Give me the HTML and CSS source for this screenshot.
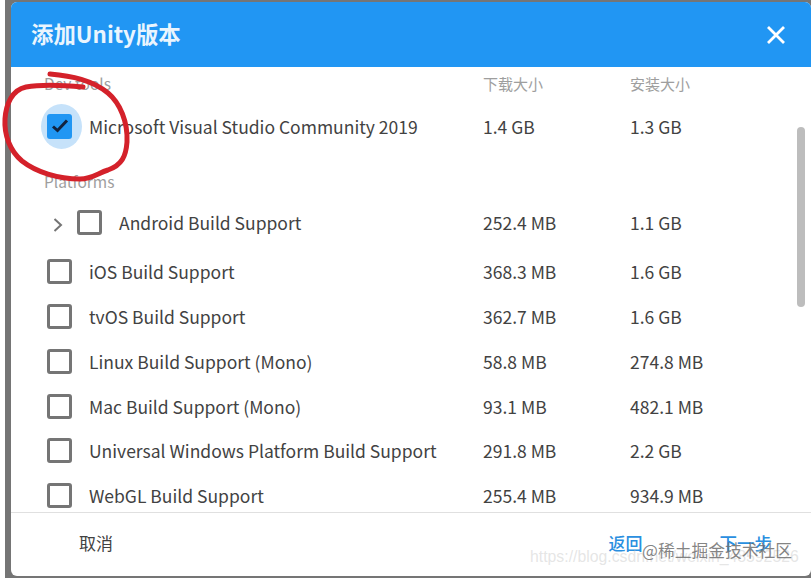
FILE: index.html
```html
<!DOCTYPE html>
<html lang="zh">
<head>
    <meta charset="UTF-8">
    <title>添加Unity版本</title>
    <link rel="stylesheet" href="styles.css">
</head>
<body>
<div class="backdrop">
    <div class="dialog">
        <!-- Header -->
        <div class="header">
            <span class="title">添加Unity版本</span>
            <svg class="close" width="20" height="20" viewBox="0 0 20 20"><path d="M2 2 18 18M18 2 2 18" stroke="#fff" stroke-width="2.8" fill="none"/></svg>
        </div>

        <!-- Module list -->
        <div class="list">
            <div class="row group first">
                <span class="name">Dev tools</span>
                <span>下载大小</span>
                <span>安装大小</span>
            </div>
            <div class="row item ms">
                <span class="check checked">
                    <svg width="25" height="25" viewBox="0 0 25 25"><path d="M6 12.5 10.5 16.5 20 6.5" stroke="#12233f" stroke-width="3" fill="none"/></svg>
                </span>
                <span class="name">Microsoft Visual Studio Community 2019</span>
                <span>1.4 GB</span>
                <span>1.3 GB</span>
            </div>
            <div class="row group platforms">
                <span class="name">Platforms</span>
            </div>
            <div class="row item android">
                <svg class="arrow" width="12" height="16" viewBox="0 0 12 16"><path d="M2.5 2 9 8 2.5 14" stroke="#757575" stroke-width="2" fill="none"/></svg>
                <span class="check"></span>
                <span class="name">Android Build Support</span>
                <span>252.4 MB</span>
                <span>1.1 GB</span>
            </div>
            <div class="row item">
                <span class="check"></span>
                <span class="name">iOS Build Support</span>
                <span>368.3 MB</span>
                <span>1.6 GB</span>
            </div>
            <div class="row item">
                <span class="check"></span>
                <span class="name">tvOS Build Support</span>
                <span>362.7 MB</span>
                <span>1.6 GB</span>
            </div>
            <div class="row item">
                <span class="check"></span>
                <span class="name">Linux Build Support (Mono)</span>
                <span>58.8 MB</span>
                <span>274.8 MB</span>
            </div>
            <div class="row item">
                <span class="check"></span>
                <span class="name">Mac Build Support (Mono)</span>
                <span>93.1 MB</span>
                <span>482.1 MB</span>
            </div>
            <div class="row item">
                <span class="check"></span>
                <span class="name">Universal Windows Platform Build Support</span>
                <span>291.8 MB</span>
                <span>2.2 GB</span>
            </div>
            <div class="row item">
                <span class="check"></span>
                <span class="name">WebGL Build Support</span>
                <span>255.4 MB</span>
                <span>934.9 MB</span>
            </div>
            <div class="scrollbar"></div>
        </div>

        <!-- Footer -->
        <div class="footer">
            <span class="cancel">取消</span>
            <span class="link back">返回</span>
            <span class="link next">下一步</span>
        </div>
    </div>
</div>

<!-- Hand drawn circle and image watermarks on top of the screenshot -->
<svg class="scribble" width="140" height="190" viewBox="0 0 140 190">
    <path d="M50 74C72 76 92 80 108 93C120 103 128 122 127 142C126 156 122 165 108 170C98 173 92 179 80 179C58 179 36 172 22 161C10 151 4 135 5 119C6 104 12 90 26 87C42 84 62 85 83 87" stroke="#d4212a" stroke-width="5" fill="none" stroke-linecap="round"/>
</svg>
<span class="mark-url">https://blog.csdn.net/weixin_48592526</span>
<span class="mark-site">@稀土掘金技术社区</span>
</body>
</html>
```

FILE: styles.css
```css
/* General Reset */
body {
    margin: 0;
    height: 578px;
    overflow: hidden;
    background: #ffffff;
    padding-left: 5px;
    font-family: "Noto Sans CJK SC", "Noto Sans", sans-serif;
    color: #424242;
    box-sizing: border-box;
}

.backdrop {
    height: 578px;
    box-sizing: border-box;
    background: #757575;
    padding: 2px 0 2px 6px;
}

.dialog {
    height: 100%;
    background: #ffffff;
    border-radius: 6px;
    display: flex;
    flex-direction: column;
    overflow: hidden;
    isolation: isolate;
}

/* Header */
.header {
    height: 65px;
    flex: none;
    box-sizing: border-box;
    background: #2196f3;
    display: flex;
    align-items: center;
    justify-content: space-between;
    padding: 0 25px 3px 20px;
}

.close {
    margin-top: 3px;
}

.title {
    color: #eaf5fe;
    font-size: 22.4px;
    font-weight: 700;
}

/* List */
.list {
    flex: 1;
    position: relative;
    overflow: hidden;
}

.row {
    display: grid;
    grid-template-columns: 394px 147px 1fr;
    align-items: center;
    padding-left: 78px;
    font-size: 17.5px;
    white-space: nowrap;
}

.group {
    height: 30px;
    margin-top: 11.5px;
    padding-left: 33px;
    grid-template-columns: 439px 147px 1fr;
    font-size: 15px;
    color: #9e9e9e;
}

.group .name {
    font-size: 15.5px;
}

.group.first {
    margin-top: 1px;
}

.platforms {
    margin-bottom: 5.1px;
}

.item {
    height: 44.8px;
    position: relative;
}

.ms {
    height: 56px;
}

.android {
    margin-bottom: 4px;
}

.android .name {
    padding-left: 30px;
}

.check {
    position: absolute;
    left: 36px;
    top: 50%;
    width: 25px;
    height: 25px;
    margin-top: -12.5px;
    box-sizing: border-box;
    border: 3px solid #757575;
    border-radius: 3px;
}

.check.checked {
    background: #2196f3;
    border: none;
}

/* Focus halo round the ticked box */
.check.checked::before {
    content: "";
    position: absolute;
    left: -6px;
    top: -10px;
    width: 41px;
    height: 45px;
    border-radius: 50%;
    background: #c6e2fa;
    z-index: -1;
}

.check.checked svg {
    display: block;
}

.android .check {
    left: 66px;
}

.arrow {
    position: absolute;
    left: 41px;
    top: 16px;
}

.scrollbar {
    position: absolute;
    left: 786px;
    top: 60px;
    width: 8px;
    height: 180px;
    border-radius: 4px;
    background: #bdbdbd;
}

/* Footer */
.footer {
    height: 64px;
    flex: none;
    box-sizing: border-box;
    border-top: 1px solid #e0e0e0;
    display: flex;
    align-items: center;
    padding: 0 39px 4px 68px;
    font-size: 17px;
}

.cancel {
    margin-right: auto;
}

.link {
    color: #2a8fe0;
    font-weight: 500;
}

.next {
    font-size: 17.5px;
}

.back {
    margin-right: 77px;
}

/* Overlays */
.scribble {
    position: absolute;
    left: 0;
    top: 0;
}

.mark-url {
    position: absolute;
    left: 530px;
    top: 548px;
    font-family: "Liberation Sans", sans-serif;
    font-size: 15.8px;
    color: rgba(190, 190, 190, 0.4);
    white-space: nowrap;
}

.mark-site {
    position: absolute;
    left: 642px;
    top: 538px;
    font-size: 16.8px;
    color: rgba(110, 110, 110, 0.85);
    white-space: nowrap;
}
```
